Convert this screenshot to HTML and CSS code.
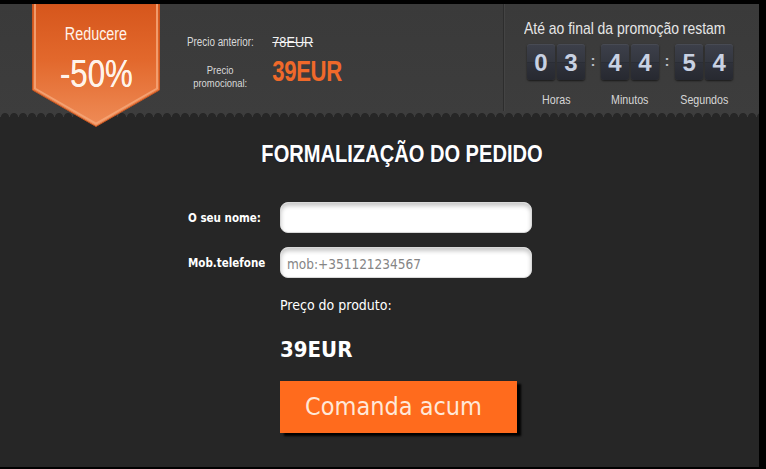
FILE: index.html
```html
<!DOCTYPE html>
<html lang="pt">
<head>
<meta charset="utf-8">
<title>Formalização do pedido</title>
<link rel="stylesheet" href="styles.css">
</head>
<body>
<div class="page">
  <header class="top">
    <div class="badge">
      <svg class="badge-shape" viewBox="0 0 128 123" width="128" height="123" aria-hidden="true">
        <defs>
          <linearGradient id="bg" x1="0" y1="0" x2="0" y2="1">
            <stop offset="0" stop-color="#d6561c"/>
            <stop offset="0.45" stop-color="#e2682c"/>
            <stop offset="1" stop-color="#ef8c57"/>
          </linearGradient>
        </defs>
        <polygon points="0.5,0 127.5,0 127.5,86 64,122.5 0.5,86" fill="url(#bg)" stroke="#c9551f" stroke-width="1"/>
        <polyline points="3,0 3,84.5 64,119.5 125,84.5 125,0" fill="none" stroke="#f5a678" stroke-width="2" opacity="0.85"/>
      </svg>
      <div class="badge-text">
        <span class="badge-small">Reducere</span>
        <span class="badge-big">-50%</span>
      </div>
    </div>

    <div class="prices">
      <span class="p-label">Precio anterior:</span>
      <span class="p-old">78EUR</span>
      <span class="p-label two">Precio<br>promocional:</span>
      <span class="p-new">39EUR</span>
    </div>

    <div class="timer">
      <div class="timer-title">Até ao final da promoção restam</div>
      <div class="clock">
        <div class="unit">
          <div class="digits"><span class="d">0</span><span class="d">3</span></div>
          <span class="u-label">Horas</span>
        </div>
        <span class="colon">:</span>
        <div class="unit">
          <div class="digits"><span class="d">4</span><span class="d">4</span></div>
          <span class="u-label">Minutos</span>
        </div>
        <span class="colon">:</span>
        <div class="unit">
          <div class="digits"><span class="d">5</span><span class="d">4</span></div>
          <span class="u-label">Segundos</span>
        </div>
      </div>
    </div>
  </header>

  <main class="order">
    <div class="order-inner">
      <h1 class="title">FORMALIZAÇÃO DO PEDIDO</h1>
      <form class="form">
        <div class="row">
          <label class="f-label" for="nome">O seu nome:</label>
          <input class="f-input" id="nome" type="text">
        </div>
        <div class="row">
          <label class="f-label" for="tel">Mob.telefone</label>
          <input class="f-input" id="tel" type="text" placeholder="mob:+351121234567">
        </div>
        <div class="col">
          <div class="prod-label">Preço do produto:</div>
          <div class="prod-price">39EUR</div>
          <button class="btn" type="button">Comanda acum</button>
        </div>
      </form>
    </div>
  </main>
</div>
</body>
</html>
```

FILE: styles.css
```css
html, body {
  margin: 0;
  padding: 0;
  background: #000;
  height: 469px;
  overflow: hidden;
}

.page {
  width: 759px;
  height: 463px;
  margin-top: 4px;
  display: flex;
  flex-direction: column;
  background: #262626;
  font-family: "DejaVu Sans Condensed", "DejaVu Sans", sans-serif;
}

/* ---------- header ---------- */
.top {
  height: 113px;
  flex-shrink: 0;
  display: flex;
  align-items: flex-start;
  background:
    radial-gradient(circle at 5px 6px, #262626 3.6px, rgba(38,38,38,0) 4.4px) left bottom / 9px 6px repeat-x,
    linear-gradient(#3a3a3a, #3d3d3d);
  font-family: "Liberation Sans", Arial, sans-serif;
}

.badge {
  position: relative;
  z-index: 2;
  flex-shrink: 0;
  width: 128px;
  height: 123px;
  margin-left: 32px;
}

.badge-shape {
  display: block;
}

.badge-text {
  position: absolute;
  left: 0;
  top: 0;
  width: 128px;
  display: flex;
  flex-direction: column;
  align-items: center;
  color: #fff3ea;
}

/* narrow type: Liberation Sans compressed horizontally */
.badge-small {
  margin-top: 20px;
  font-size: 17.5px;
  line-height: 20px;
  transform: scaleX(0.82);
}

.badge-big {
  margin-top: 9px;
  font-size: 38px;
  line-height: 42px;
  transform: scaleX(0.82);
  text-shadow: 0 0 0.6px #fff3ea;
}

.prices {
  margin-left: 27px;
  margin-top: 29px;
  display: grid;
  grid-template-columns: 81px auto;
  column-gap: 23px;
  align-items: start;
  transform: scaleX(0.82);
  transform-origin: left top;
}

.p-label {
  font-size: 12px;
  line-height: 14px;
  color: #d9d9d9;
  text-align: center;
  white-space: nowrap;
  margin-top: 2px;
}

.p-label.two {
  font-size: 11.5px;
  line-height: 13px;
  margin-top: 13px;
}

.p-old {
  font-size: 15.5px;
  line-height: 18px;
  color: #f2f2f2;
  text-decoration: line-through;
}

.p-new {
  margin-top: 2.7px;
  font-size: 30px;
  line-height: 34px;
  font-weight: bold;
  color: #f0692a;
  letter-spacing: -0.5px;
  transform: scaleX(0.9);
  transform-origin: left top;
}

.timer {
  margin-left: auto;
  align-self: stretch;
  margin-bottom: 6px;
  width: 235px;
  padding: 15px 0 0 20px;
  border-left: 1px solid #2d2d2d;
  box-shadow: inset 1px 0 0 #444;
}

.timer-title {
  font-size: 17px;
  line-height: 20px;
  color: #e6e6e6;
  white-space: nowrap;
  transform: scaleX(0.82);
  transform-origin: left top;
}

.clock {
  display: flex;
  align-items: flex-start;
  margin-top: 5px;
  margin-left: 3px;
}

.unit {
  display: flex;
  flex-direction: column;
  align-items: center;
}

.digits {
  display: flex;
  gap: 2px;
}

.d {
  width: 28px;
  height: 36px;
  border-radius: 3px;
  background:
    linear-gradient(#3d404a 0%, #343740 49%, #1c1d22 49.5%, #1c1d22 51%, #2f323b 51.5%, #272930 100%);
  box-shadow: 0 1px 2px rgba(0,0,0,.6), inset 0 1px 0 rgba(255,255,255,.06);
  color: #c8d1e2;
  font-size: 24px;
  font-weight: bold;
  line-height: 37px;
  text-align: center;
}

.colon {
  width: 16px;
  text-align: center;
  color: #b8bcc4;
  font-size: 15px;
  font-weight: bold;
  line-height: 34px;
}

.u-label {
  margin-top: 12px;
  font-size: 13px;
  line-height: 16px;
  color: #d6d6d6;
  white-space: nowrap;
  transform: scaleX(0.82);
}

/* ---------- order form ---------- */
.order {
  flex: 1;
  padding-top: 22px;
}

.order-inner {
  margin-left: 188px;
  width: 428px;
}

.title {
  margin: 0;
  font-family: "Liberation Sans", Arial, sans-serif;
  font-weight: bold;
  font-size: 24.5px;
  line-height: 30px;
  color: #fff;
  text-align: center;
  white-space: nowrap;
  text-shadow: 1px 1px 1px #1b2233;
  transform: scaleX(0.82);
}

.form {
  margin-top: 33px;
  display: flex;
  flex-direction: column;
}

.row {
  display: flex;
  align-items: center;
  height: 31px;
  margin-bottom: 14px;
}

.f-label {
  width: 92px;
  flex-shrink: 0;
  font-size: 11.5px;
  font-weight: bold;
  color: #fff;
}

.f-input {
  box-sizing: border-box;
  width: 252px;
  height: 31px;
  margin: 0;
  padding: 2px 6px 0;
  border: 1px solid #d8d8d8;
  border-radius: 8px;
  background: #fff;
  box-shadow: inset 0 3px 4px rgba(0,0,0,.22);
  font-family: "DejaVu Sans Condensed", "DejaVu Sans", sans-serif;
  font-size: 13.5px;
  color: #333;
  outline: none;
}

.f-input::placeholder {
  color: #858585;
}

.col {
  margin-left: 92px;
  margin-top: 5px;
  display: flex;
  flex-direction: column;
  align-items: flex-start;
}

.prod-label {
  font-size: 14px;
  line-height: 17px;
  color: #fff;
}

.prod-price {
  margin-top: 23px;
  font-size: 22px;
  line-height: 25px;
  font-weight: bold;
  color: #fff;
}

.btn {
  margin-top: 19px;
  width: 237px;
  height: 52px;
  border: 0;
  padding: 0 10px 0 0;
  background: #ff6b1d;
  box-shadow: 4px 3px 2px #000;
  color: #ffe8d8;
  font-family: "DejaVu Sans Condensed", "DejaVu Sans", sans-serif;
  font-size: 25px;
  line-height: 52px;
  text-align: center;
  cursor: pointer;
}
```
